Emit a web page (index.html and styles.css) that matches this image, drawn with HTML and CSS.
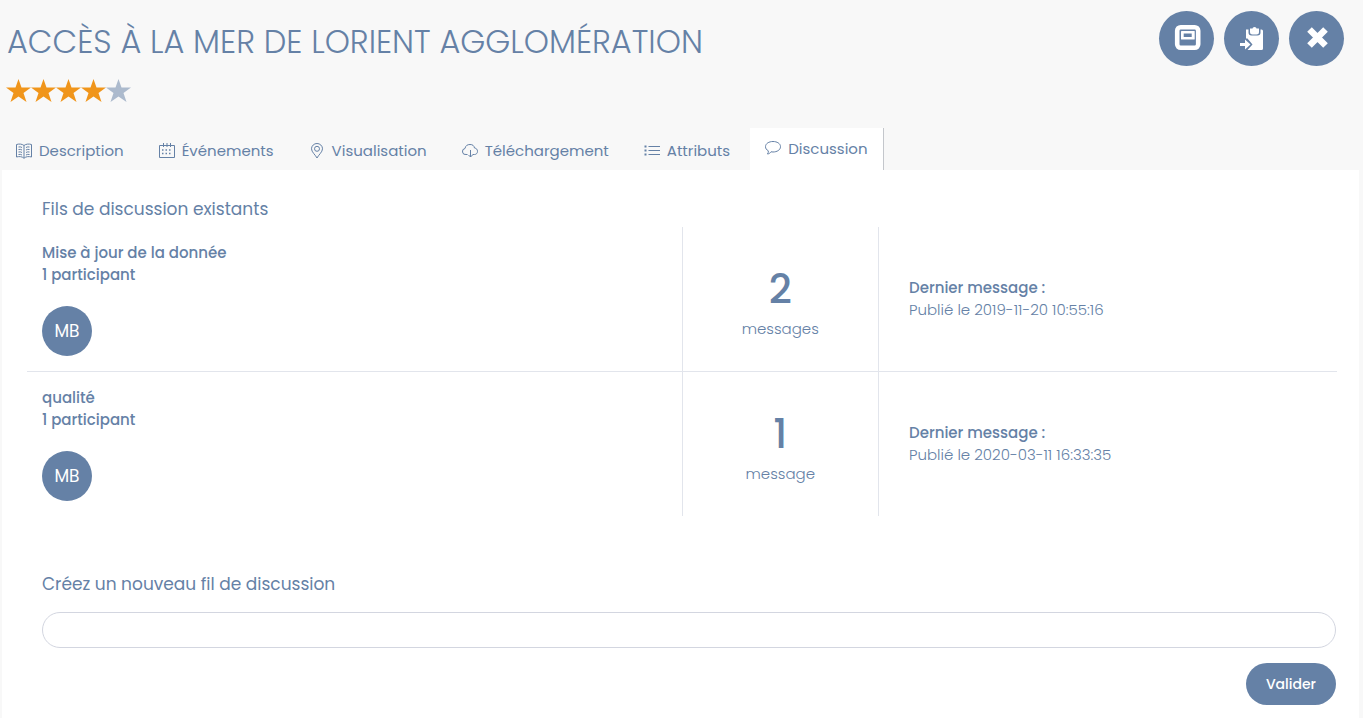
FILE: index.html
```html
<!DOCTYPE html>
<html lang="fr">
<head>
<meta charset="utf-8">
<meta name="viewport" content="width=device-width, initial-scale=1">
<title>Accès à la mer de Lorient Agglomération</title>
<link rel="stylesheet" href="styles.css">
</head>
<body>
<header class="header">
  <div class="heading">
    <h1 class="title">ACCÈS À LA MER DE LORIENT AGGLOMÉRATION</h1>
    <div class="stars" role="img" aria-label="Note : 4 sur 5">
      <svg class="star" viewBox="0 0 25 24"><path d="M11.500 0l3 8.500H24l-7.500 5.500 3 9-8-5.500-8 5.500 3-9L-1 8.500h9.500z"/></svg>
      <svg class="star" viewBox="0 0 25 24"><path d="M11.500 0l3 8.500H24l-7.500 5.500 3 9-8-5.500-8 5.500 3-9L-1 8.500h9.500z"/></svg>
      <svg class="star" viewBox="0 0 25 24"><path d="M11.500 0l3 8.500H24l-7.500 5.500 3 9-8-5.500-8 5.500 3-9L-1 8.500h9.500z"/></svg>
      <svg class="star" viewBox="0 0 25 24"><path d="M11.500 0l3 8.500H24l-7.500 5.500 3 9-8-5.500-8 5.500 3-9L-1 8.500h9.500z"/></svg>
      <svg class="star star-empty" viewBox="0 0 25 24"><path d="M11.500 0l3 8.500H24l-7.500 5.500 3 9-8-5.500-8 5.500 3-9L-1 8.500h9.500z"/></svg>
    </div>
  </div>
  <div class="actions">
    <button class="action" type="button" aria-label="Aperçu">
      <svg viewBox="0 0 55 55"><rect x="18.200" y="16.200" width="21" height="20.600" rx="3.500" fill="none" stroke="#fff" stroke-width="4.600"/><rect x="22" y="20" width="13.700" height="8.500" rx=".5" fill="#fff"/><rect x="24.700" y="22.500" width="8" height="3.500" fill="#6581a6"/></svg>
    </button>
    <button class="action" type="button" aria-label="Ajouter au panier">
      <svg viewBox="0 0 55 55"><path fill="#fff" d="M22 18.500h2.500v3q0 3 3 3h6q3 0 3-3v-3h1q1.500 0 1.500 1.500v17.500q0 1.500-1.500 1.500H23.500l5-5.500-5-6H22zM26 17.500h2.500q0-1.500 2-1.500t2 1.500H35v3.500q0 2.500-2.500 2.500h-4q-2.500 0-2.500-2.500z"/><path fill="#fff" d="M16 32h5v-3.500l5.500 5-5.500 5V35h-5z"/></svg>
    </button>
    <button class="action" type="button" aria-label="Fermer">
      <svg viewBox="0 0 55 55"><path d="M20.500 18.500l16 16M36.500 18.500l-16 16" stroke="#fff" stroke-width="6.500"/></svg>
    </button>
  </div>
</header>
<nav class="tabs">
  <a class="tab" href="#description"><svg class="icon" viewBox="0 0 16 16"><path d="M8 2.500C6 .8 3 .8.500 1.500v12.500c2.500-.7 5.500-.7 7.500 1.300 2-2 5-2 7.500-1.300V1.500C13 .8 10 .8 8 2.500zv12.500M2.500 4q2-.5 3.500.5M2.500 6.500q2-.5 3.500.5M2.500 9q2-.5 3.500.5M2.500 11.500q2-.5 3.500.5M13.500 4q-2-.5-3.500.5M13.500 6.500q-2-.5-3.500.5M13.500 9q-2-.5-3.500.5M13.500 11.500q-2-.5-3.500.5"/></svg>Description</a>
  <a class="tab" href="#evenements"><svg class="icon" viewBox="0 0 16 16"><path d="M.5 2.500h15v12H.5zM4.500 0v4M11.500 0v4M8 0v4"/><path stroke-width="1.500" stroke-dasharray="1.500 2" d="M3 7h10M3 10.500h10"/></svg>Événements</a>
  <a class="tab" href="#visualisation"><svg class="icon" viewBox="0 0 16 16"><path d="M8 15C6.500 12 2.500 9 2.500 5.800a5.500 5.300 0 0 1 11 0C13.500 9 9.500 12 8 15z"/><circle cx="8" cy="5.800" r="2.500"/></svg>Visualisation</a>
  <a class="tab" href="#telechargement"><svg class="icon" viewBox="0 0 16 16"><path d="M5.500 11.500H4a3 3 0 0 1-1-6C3.500 2.500 5.500 1.500 8 1.500s4 1 4.500 3.500c2 .2 3 1.700 3 3.300 0 2-1.300 3.200-3 3.200h-2M8.500 7v7M6.500 12l2 2 2-2"/></svg>Téléchargement</a>
  <a class="tab" href="#attributs"><svg class="icon" viewBox="0 0 16 16"><path d="M4.500 3.500H16M4.500 7.500H16M4.500 11.500H16"/><path stroke-width="2" d="M.5 3.500h2M.5 7.500h2M.5 11.500h2"/></svg>Attributs</a>
  <a class="tab tab-active" href="#discussion" aria-current="page"><svg class="icon" viewBox="0 0 16 16"><path d="M8 .5c4 0 7.500 2 7.500 5.200S12 11 8 11l-2-.2c-1 1.500-2 2-3.500 2.200.7-1 1-2 .8-3.200C1.500 8.800.5 7.500.5 5.700.5 2.500 4 .5 8 .5z"/></svg>Discussion</a>
</nav>
<main class="panel">
  <h2 class="subtitle">Fils de discussion existants</h2>
  <table class="threads">
    <tbody>
      <tr>
        <td class="topic"><strong>Mise à jour de la donnée<br>1 participant</strong><span class="avatar">MB</span></td>
        <td class="count"><span class="number">2</span>messages</td>
        <td class="last"><strong>Dernier message :</strong><br>Publié le 2019-11-20 10:55:16</td>
      </tr>
      <tr>
        <td class="topic"><strong>qualité<br>1 participant</strong><span class="avatar">MB</span></td>
        <td class="count"><span class="number">1</span>message</td>
        <td class="last"><strong>Dernier message :</strong><br>Publié le 2020-03-11 16:33:35</td>
      </tr>
    </tbody>
  </table>
  <form class="new-thread">
    <label class="subtitle" for="thread">Créez un nouveau fil de discussion</label>
    <input class="field" id="thread" type="text">
    <button class="submit" type="button">Valider</button>
  </form>
</main>
</body>
</html>
```
FILE: styles.css
```css
* {
  box-sizing: border-box;
}

body {
  margin: 0;
  background: #f8f8f8;
  color: #6581a6;
  font: 400 15px/22px Poppins, Inter, sans-serif;
}

.header {
  display: flex;
  justify-content: space-between;
  padding: 11px 19px 0 7px;
}

.title {
  margin: 10px 0 16px;
  font-size: 32px;
  line-height: 42px;
  font-weight: 300;
}

.stars {
  display: flex;
}

.star {
  width: 25px;
  height: 24px;
  overflow: visible;
  fill: #f0951b;
}

.star-empty {
  fill: #acbacd;
}

.actions {
  display: flex;
  gap: 10px;
}

.action {
  width: 55px;
  height: 55px;
  padding: 0;
  border: 0;
  border-radius: 50%;
  background: #6581a6;
}

.action svg {
  display: block;
}

.tabs {
  display: flex;
  align-items: flex-end;
  margin-top: 25px;
}

.tab {
  display: flex;
  align-items: center;
  gap: 7px;
  height: 38px;
  padding: 0 19px 0 16px;
  color: inherit;
  text-decoration: none;
}

.tab-active {
  height: 42px;
  margin-left: 1px;
  padding: 0 15px;
  border-right: 1px solid #c4c7cc;
  background: #fff;
}

.icon {
  width: 16px;
  height: 16px;
  flex: none;
  fill: none;
  stroke: #6581a6;
}

.panel {
  margin: 0 4px 0 2px;
  padding: 28px 22px 13px 25px;
  background: #fff;
}

.subtitle {
  display: block;
  margin: 0 15px;
  font-size: 17px;
  line-height: 22px;
  font-weight: 400;
}

.threads {
  width: 100%;
  margin-top: 7px;
  border-collapse: collapse;
  table-layout: fixed;
  font-weight: 300;
}

.threads tr + tr {
  border-top: 1px solid #e2e5ec;
}

.threads td {
  padding: 15px;
}

.threads strong {
  font-weight: 500;
}

.topic {
  width: 50%;
}

.count {
  width: 15%;
  border: solid #e2e5ec;
  border-width: 0 1px;
  text-align: center;
}

.threads .last {
  padding-left: 30px;
}

.number {
  display: block;
  margin: 6px 0 5px;
  font-size: 40px;
  line-height: 48px;
  font-weight: 500;
}

.avatar {
  display: flex;
  align-items: center;
  justify-content: center;
  width: 50px;
  height: 50px;
  margin-top: 20px;
  border-radius: 50%;
  background: #6581a6;
  color: #fff;
  font-size: 17px;
  font-weight: 400;
}

.new-thread {
  display: flex;
  flex-direction: column;
  margin-top: 57px;
}

.field {
  height: 36px;
  margin: 17px 1px 15px 15px;
  padding: 0 16px;
  border: 1px solid #d3d6e0;
  border-radius: 18px;
  background: #fff;
  color: inherit;
  font: inherit;
}

.submit {
  align-self: flex-end;
  height: 42px;
  margin-right: 1px;
  padding: 0 20px;
  border: 0;
  border-radius: 21px;
  background: #6581a6;
  color: #fff;
  font: inherit;
  font-size: 14px;
  font-weight: 500;
}
```
